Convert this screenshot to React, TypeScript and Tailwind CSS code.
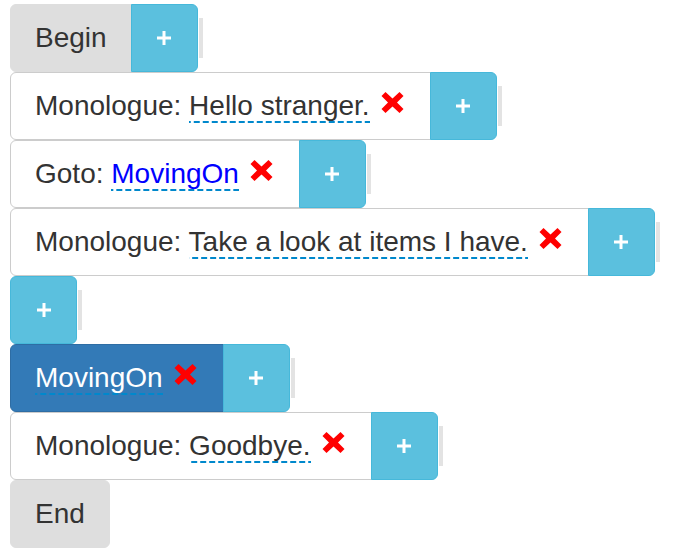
import React from "react";

type Step =
  | { kind: "begin" }
  | { kind: "end" }
  | { kind: "empty" }
  | { kind: "label"; name: string }
  | { kind: "monologue"; text: string }
  | { kind: "goto"; target: string };

const steps: Step[] = [
  { kind: "begin" },
  { kind: "monologue", text: "Hello stranger." },
  { kind: "goto", target: "MovingOn" },
  { kind: "monologue", text: "Take a look at items I have." },
  { kind: "empty" },
  { kind: "label", name: "MovingOn" },
  { kind: "monologue", text: "Goodbye." },
  { kind: "end" },
];

function RemoveIcon() {
  return (
    <svg
      width="23"
      height="21"
      viewBox="0 0 23 21"
      className="inline-block align-[2px] ml-[11px] mr-[2px]"
    >
      <path
        d="M0.5 4 L4.5 0 L11.5 6.5 L18.5 0 L22.5 4 L16 10.5 L22.5 17 L18.5 21 L11.5 14.5 L4.5 21 L0.5 17 L7 10.5 Z"
        fill="#ff0000"
      />
    </svg>
  );
}

function PlusButton({ alone = false }: { alone?: boolean }) {
  return (
    <button
      className={`w-[67px] h-[68px] flex items-center justify-center bg-[#5bc0de] border border-[#46b8da] ${
        alone ? "rounded-[6px]" : "rounded-r-[6px] -ml-px"
      }`}
    >
      <svg width="14" height="14" viewBox="0 0 14 14">
        <rect x="5.5" y="0" width="3" height="14" fill="#fff" />
        <rect x="0" y="5.5" width="14" height="3" fill="#fff" />
      </svg>
    </button>
  );
}

// x-editable style dashed underline
function Editable({ children, className = "" }: { children: React.ReactNode; className?: string }) {
  return (
    <span
      className={`pb-[2px] bg-[linear-gradient(to_right,#0088cc_6px,transparent_6px)] bg-[length:9px_2px] bg-repeat-x bg-bottom ${className}`}
    >
      {children}
    </span>
  );
}

function Grip() {
  return <div className="ml-px w-[4px] h-[40px] self-center bg-[#e3e3e3]" />;
}

function Box({
  children,
  tone = "white",
  single = false,
}: {
  children: React.ReactNode;
  tone?: "white" | "grey" | "primary";
  single?: boolean;
}) {
  const tones = {
    white: "bg-white border-[#cccccc] text-[#333333]",
    grey: "bg-[#dedede] border-[#dedede] text-[#333333]",
    primary: "bg-[#337ab7] border-[#2e6da4] text-white",
  };
  return (
    <div
      className={`h-[68px] px-[24px] py-[15px] border whitespace-nowrap leading-[36px] ${tones[tone]} ${
        single ? "rounded-[6px]" : "rounded-l-[6px]"
      }`}
    >
      {children}
    </div>
  );
}

export default function App() {
  return (
    <div
      className="pl-[10px] pt-[4px] text-[28px] bg-white min-h-[559px]"
      style={{ fontFamily: '"Liberation Sans", Arial, sans-serif' }}
    >
      {steps.map((step, i) => (
        <div key={i} className="flex h-[68px]">
          {step.kind === "begin" && (
            <>
              <Box tone="grey">Begin</Box>
              <PlusButton />
              <Grip />
            </>
          )}
          {step.kind === "monologue" && (
            <>
              <Box>
                Monologue: <Editable>{step.text}</Editable>
                <RemoveIcon />
              </Box>
              <PlusButton />
              <Grip />
            </>
          )}
          {step.kind === "goto" && (
            <>
              <Box>
                Goto: <Editable className="text-[#0000ff]">{step.target}</Editable>
                <RemoveIcon />
              </Box>
              <PlusButton />
              <Grip />
            </>
          )}
          {step.kind === "empty" && (
            <>
              <PlusButton alone />
              <Grip />
            </>
          )}
          {step.kind === "label" && (
            <>
              <Box tone="primary">
                <Editable>{step.name}</Editable>
                <RemoveIcon />
              </Box>
              <PlusButton />
              <Grip />
            </>
          )}
          {step.kind === "end" && (
            <Box tone="grey" single>
              End
            </Box>
          )}
        </div>
      ))}
    </div>
  );
}
